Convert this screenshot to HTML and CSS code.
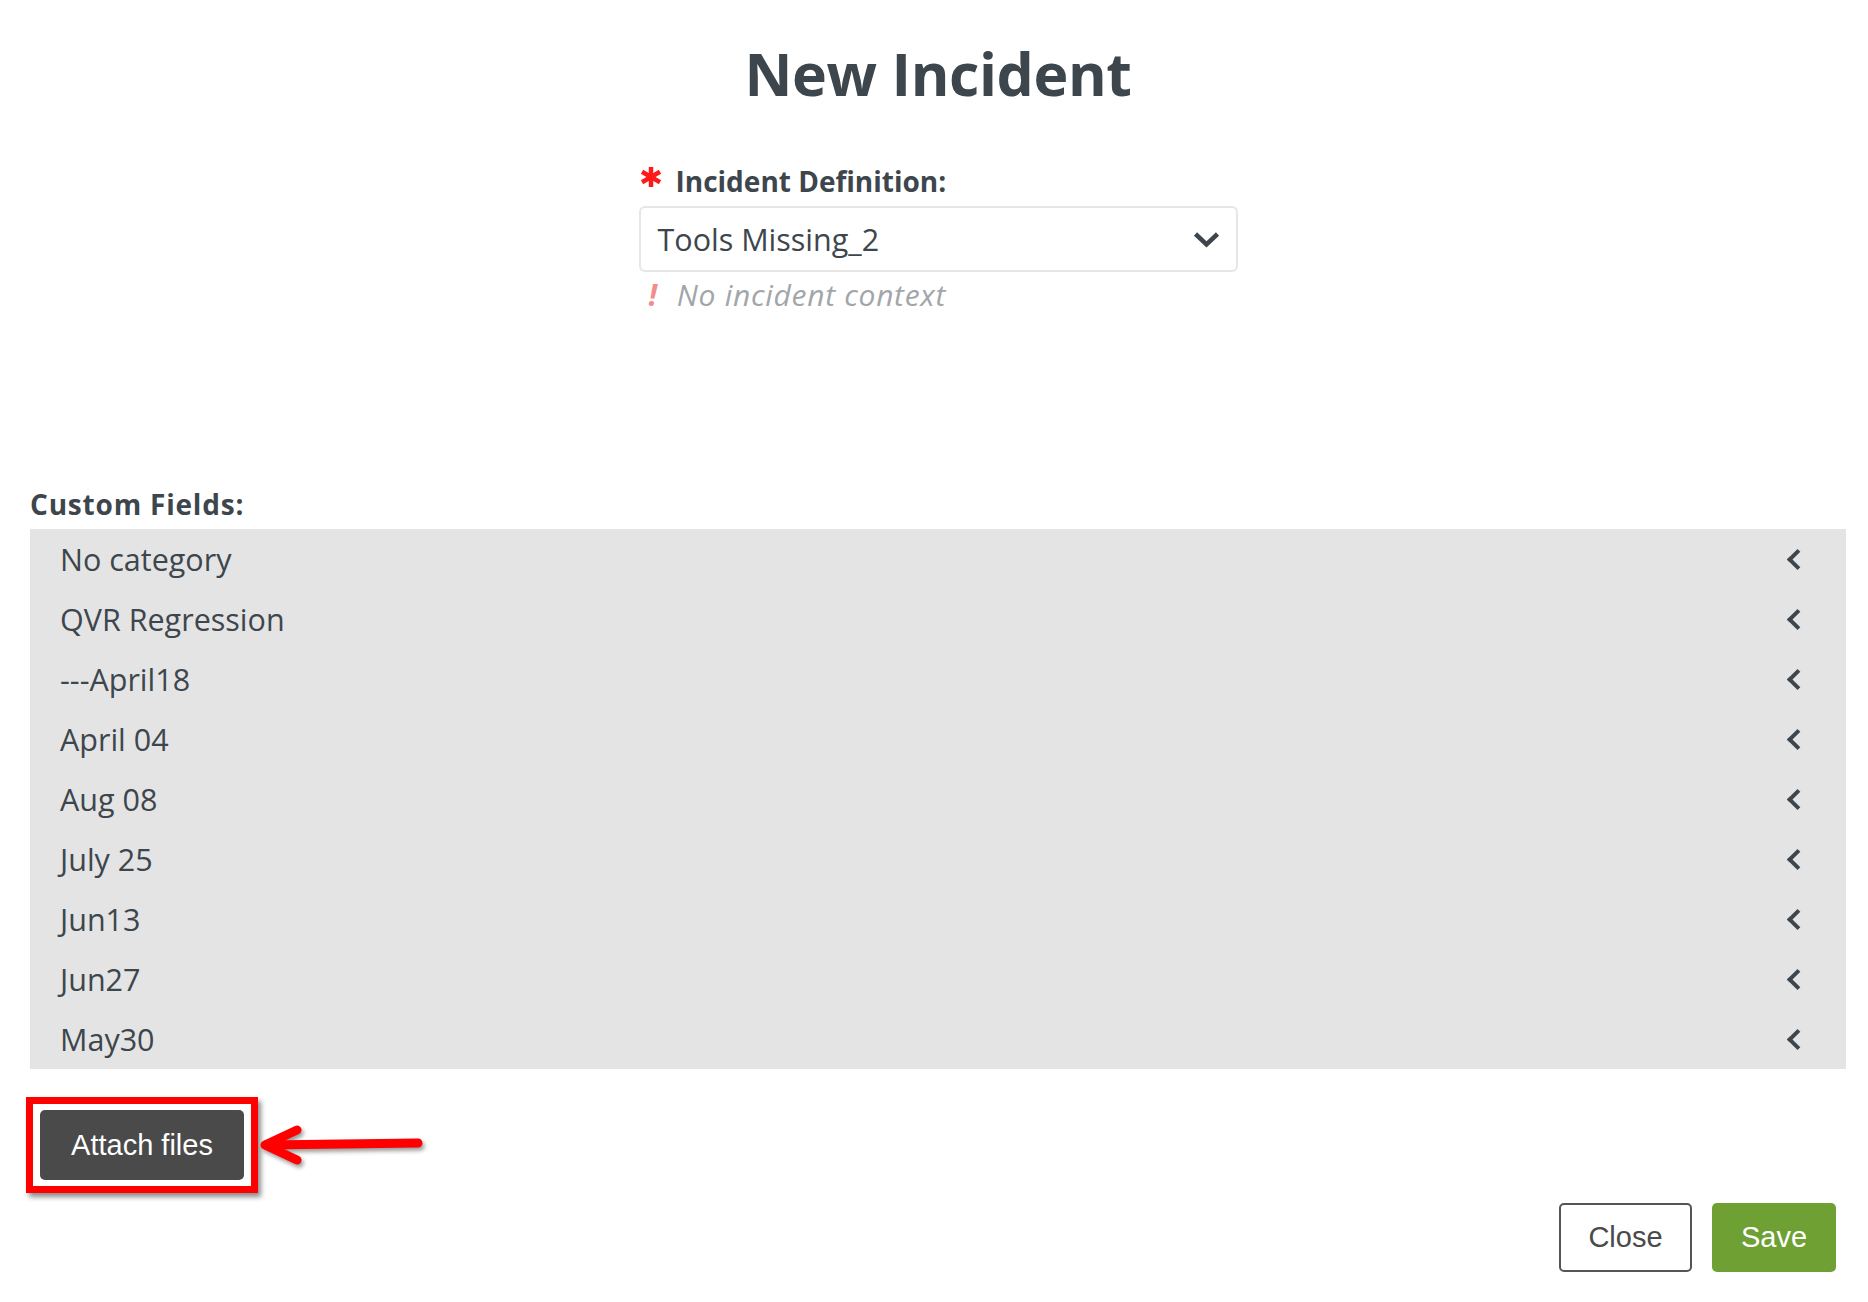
FILE: index.html
```html
<!DOCTYPE html>
<html lang="en">
<head>
    <title>New Incident</title>
    <meta charset="utf-8">
    <link rel="stylesheet" href="styles.css">
</head>
<body>
    <div class="modal">
        <div class="top">
            <h1 class="title">New Incident</h1>
            <div class="field">
                <div class="label">
                    <svg class="required" width="24" height="20" viewBox="0 0 24 20">
                        <g stroke="#ff1a1a" stroke-width="4.5">
                            <line x1="12" y1="0" x2="12" y2="20"/>
                            <line x1="3" y1="4.8" x2="21" y2="15.2"/>
                            <line x1="3" y1="15.2" x2="21" y2="4.8"/>
                        </g>
                    </svg>
                    Incident Definition:
                </div>
                <div class="select">
                    <span>Tools Missing_2</span>
                    <svg width="27" height="17" viewBox="0 0 27 17">
                        <polyline points="2.5,3 13.5,13.5 24.5,3" fill="none" stroke="#3d464d" stroke-width="4.5"/>
                    </svg>
                </div>
                <div class="hint"><span class="bang">!</span>No incident context</div>
            </div>
        </div>

        <div class="section-label">Custom Fields:</div>
        <div class="panel">
            <div class="row"><span>No category</span><i class="chev"></i></div>
            <div class="row"><span>QVR Regression</span><i class="chev"></i></div>
            <div class="row"><span>---April18</span><i class="chev"></i></div>
            <div class="row"><span>April 04</span><i class="chev"></i></div>
            <div class="row"><span>Aug 08</span><i class="chev"></i></div>
            <div class="row"><span>July 25</span><i class="chev"></i></div>
            <div class="row"><span>Jun13</span><i class="chev"></i></div>
            <div class="row"><span>Jun27</span><i class="chev"></i></div>
            <div class="row"><span>May30</span><i class="chev"></i></div>
        </div>

        <div class="attach-row">
            <div class="highlight">
                <button class="btn-dark">Attach files</button>
            </div>
            <svg class="arrow" width="170" height="46" viewBox="0 0 170 46">
                <g fill="none" stroke="#ff0000" stroke-width="9" stroke-linecap="round" stroke-linejoin="round">
                    <line x1="8" y1="23" x2="160" y2="21"/>
                    <polyline points="39,8 7,23 39,38"/>
                </g>
            </svg>
        </div>

        <div class="footer">
            <button class="btn-outline">Close</button>
            <button class="btn-green">Save</button>
        </div>
    </div>
</body>
</html>
```

FILE: styles.css
```css
body {
    margin: 0px;
    background-color: #ffffff;
    font-family: "Open Sans", Lato, sans-serif;
    color: #3d464d;
}
.modal {
    padding: 37px 22px 0 30px;
}
.top {
    display: flex;
    flex-direction: column;
    align-items: center;
}
.title {
    margin: 0;
    font-size: 59px;
    line-height: 73px;
    font-weight: 700;
    letter-spacing: -0.4px;
    color: #3d464d;
}
.field {
    width: 599px;
    margin-top: 54px;
}
.label {
    display: flex;
    align-items: center;
    gap: 13px;
    font-size: 28px;
    line-height: 34px;
    font-weight: 700;
}
.required {
    margin-top: -8px;
}
.select {
    margin-top: 8px;
    height: 62px;
    border: 2px solid #e6e6e6;
    border-radius: 6px;
    display: flex;
    align-items: center;
    justify-content: space-between;
    padding: 0 16px 0 17px;
    font-size: 30.5px;
}
.hint {
    margin-top: 5px;
    font-size: 30px;
    line-height: 36px;
    font-style: italic;
    letter-spacing: 0.7px;
    color: #a2a6aa;
}
.bang {
    color: #f38d8d;
    font-weight: 700;
    margin-left: 10px;
    margin-right: 19px;
}
.section-label {
    margin-top: 174px;
    font-size: 28px;
    line-height: 34px;
    font-weight: 700;
    letter-spacing: 0.8px;
}
.panel {
    margin-top: 8px;
    background-color: #e4e4e4;
}
.row {
    height: 60px;
    display: flex;
    align-items: center;
    justify-content: space-between;
    padding: 0 44px 0 30px;
    font-size: 30.5px;
}
.chev {
    width: 11px;
    height: 11px;
    border-left: 4px solid #3d464d;
    border-bottom: 4px solid #3d464d;
    transform: rotate(45deg);
    margin-right: -3px;
}
.attach-row {
    margin-top: 28px;
    margin-left: -4px;
    display: flex;
    align-items: center;
}
.highlight {
    border: 7px solid #ff0000;
    padding: 6px 7px;
    box-shadow: 3px 4px 5px rgba(0, 0, 0, 0.45);
}
.btn-dark {
    display: block;
    width: 204px;
    height: 70px;
    background: #4a4a4a;
    color: #ffffff;
    border: 0;
    border-radius: 5px;
    font-family: "Liberation Sans", Arial, sans-serif;
    font-size: 29px;
}
.arrow {
    filter: drop-shadow(2px 3px 2px rgba(0, 0, 0, 0.4));
}
.footer {
    margin-top: 10px;
    padding-right: 10px;
    display: flex;
    justify-content: flex-end;
    gap: 20px;
}
.btn-outline, .btn-green {
    height: 69px;
    border-radius: 5px;
    font-family: "Liberation Sans", Arial, sans-serif;
    font-size: 29px;
}
.btn-outline {
    width: 133px;
    background: #ffffff;
    color: #4a4a4a;
    border: 2px solid #555555;
}
.btn-green {
    width: 124px;
    background: #6ea034;
    color: #ffffff;
    border: 0;
}
```
